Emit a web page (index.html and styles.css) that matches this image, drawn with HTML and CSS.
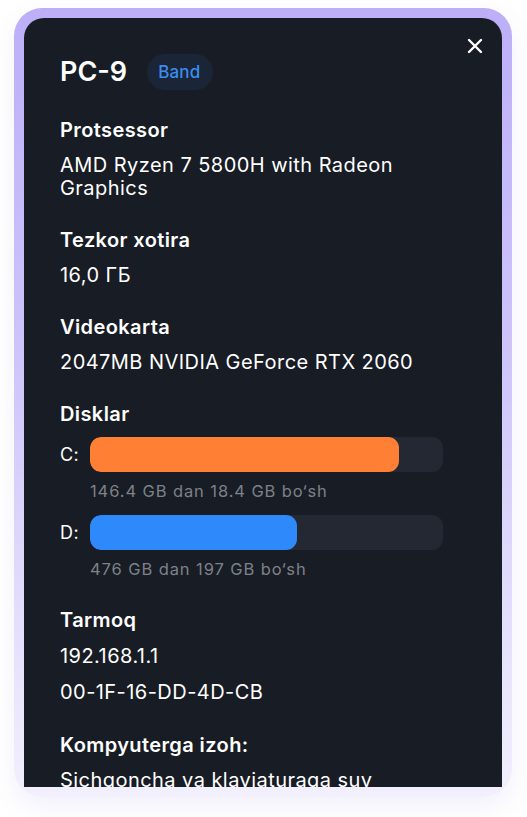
FILE: index.html
```html
<!DOCTYPE html>
<html lang="uz">
<head>
<meta charset="utf-8">
<title>PC-9</title>
<link rel="stylesheet" href="styles.css">
</head>
<body>
<div class="frame">
  <div class="card">
    <button class="close" aria-label="Yopish">
      <svg width="16" height="16" viewBox="0 0 16 16"><path d="M2 2 L14 14 M14 2 L2 14" stroke="#ffffff" stroke-width="2.4" stroke-linecap="round" fill="none"/></svg>
    </button>
    <div class="title-row">
      <h1 class="title">PC-9</h1>
      <span class="pill">Band</span>
    </div>

    <section class="section">
      <h2 class="label">Protsessor</h2>
      <p class="value">AMD Ryzen 7 5800H with Radeon Graphics</p>
    </section>

    <section class="section">
      <h2 class="label">Tezkor xotira</h2>
      <p class="value">16,0 ГБ</p>
    </section>

    <section class="section">
      <h2 class="label">Videokarta</h2>
      <p class="value">2047MB NVIDIA GeForce RTX 2060</p>
    </section>

    <section class="section">
      <h2 class="label disks-label">Disklar</h2>
      <div class="disk">
        <div class="disk-row">
          <span class="disk-name">C:</span>
          <div class="track"><div class="fill fill-orange" style="width: 87.4%"></div></div>
        </div>
        <p class="disk-info">146.4 GB dan 18.4 GB bo‘sh</p>
      </div>
      <div class="disk">
        <div class="disk-row">
          <span class="disk-name">D:</span>
          <div class="track"><div class="fill fill-blue" style="width: 58.6%"></div></div>
        </div>
        <p class="disk-info">476 GB dan 197 GB bo‘sh</p>
      </div>
    </section>

    <section class="section section-net">
      <h2 class="label">Tarmoq</h2>
      <p class="value">192.168.1.1</p>
      <p class="value">00-1F-16-DD-4D-CB</p>
    </section>

    <section class="section">
      <h2 class="label">Kompyuterga izoh:</h2>
      <p class="value">Sichgoncha va klaviaturaga suv to‘kilganligi sababli tozalash kerak</p>
    </section>
  </div>
</div>
</body>
</html>
```

FILE: styles.css
```css
* {
  box-sizing: border-box;
}

html, body {
  margin: 0;
  padding: 0;
  background: #ffffff;
  overflow: hidden;
}

body {
  font-family: Inter, "Noto Sans", "Liberation Sans", sans-serif;
  width: 527px;
  height: 817px;
}

.frame {
  margin: 8px 15px 0 14px;
  width: 498px;
  padding: 10px;
  border-radius: 28px;
  background: linear-gradient(180deg, #bcaff8 0%, #cec5fa 45%, #f2f0fd 100%);
  box-shadow: 0 10px 26px rgba(130, 110, 220, 0.10);
}

.card {
  position: relative;
  height: 769px;
  overflow: hidden;
  background: #181c24;
  border-radius: 20px 20px 0 0;
  padding: 36px 36px 0 36px;
  color: #ffffff;
}

.close {
  position: absolute;
  top: 20px;
  right: 19px;
  width: 16px;
  height: 16px;
  padding: 0;
  border: 0;
  background: none;
  display: block;
  cursor: pointer;
}

.close svg {
  display: block;
}

.title-row {
  display: flex;
  align-items: center;
  gap: 20px;
  height: 36px;
}

.title {
  margin: 0;
  font-size: 27px;
  font-weight: 600;
  line-height: 36px;
}

.pill {
  display: inline-flex;
  align-items: center;
  height: 36px;
  padding: 0 12px 0 11px;
  border-radius: 18px;
  background: #1a2537;
  color: #3a8df0;
  font-size: 17px;
  font-weight: 500;
  letter-spacing: 0.2px;
}

.section {
  margin-top: 28px;
}

.section-net {
  margin-top: 29px;
}

.label {
  margin: 0 0 12px 0;
  font-size: 20px;
  font-weight: 600;
  line-height: 24px;
  letter-spacing: 0.4px;
}

.disks-label {
  margin-bottom: 11px;
}

.value {
  margin: 0;
  font-size: 20px;
  font-weight: 400;
  line-height: 23px;
  letter-spacing: 0.45px;
  color: #ffffff;
}

.section-net .label {
  margin-bottom: 13px;
}

.section-net .value + .value {
  margin-top: 13px;
}

.section-net + .section {
  margin-top: 29px;
}

.disk {
  width: 383px;
}

.disk + .disk {
  margin-top: 14px;
}

.disk-row {
  display: flex;
  align-items: center;
}

.disk-name {
  width: 30px;
  font-size: 18px;
  line-height: 24px;
  letter-spacing: 0.4px;
}

.track {
  flex: 1;
  height: 35px;
  border-radius: 11px;
  background: #242832;
  overflow: hidden;
}

.fill {
  height: 100%;
  border-radius: 11px;
}

.fill-orange {
  background: #ff7f35;
}

.fill-blue {
  background: #2e89fb;
}

.disk-info {
  margin: 9px 0 0 30px;
  font-size: 16.5px;
  line-height: 20px;
  letter-spacing: 0.9px;
  color: #7d8189;
}
```
